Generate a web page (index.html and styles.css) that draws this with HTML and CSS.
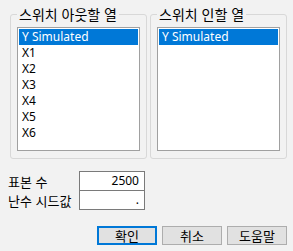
FILE: index.html
```html
<!DOCTYPE html>
<html lang="ko">
<head>
    <meta charset="UTF-8">
    <title>스위치</title>
    <link rel="stylesheet" href="styles.css">
</head>
<body>
    <div class="dialog">
        <div class="groups">
            <fieldset class="group">
                <legend>스위치 아웃할 열</legend>
                <div class="listbox">
                    <div class="item selected">Y Simulated</div>
                    <div class="item">X1</div>
                    <div class="item">X2</div>
                    <div class="item">X3</div>
                    <div class="item">X4</div>
                    <div class="item">X5</div>
                    <div class="item">X6</div>
                </div>
            </fieldset>
            <fieldset class="group">
                <legend>스위치 인할 열</legend>
                <div class="listbox">
                    <div class="item selected">Y Simulated</div>
                </div>
            </fieldset>
        </div>

        <div class="fields">
            <div class="field">
                <span class="label">표본 수</span>
                <div class="input">2500</div>
            </div>
            <div class="field">
                <span class="label">난수 시드값</span>
                <div class="input">.</div>
            </div>
        </div>

        <div class="buttons">
            <button class="btn default">확인</button>
            <button class="btn">취소</button>
            <button class="btn">도움말</button>
        </div>
    </div>
</body>
</html>
```

FILE: styles.css
```css
body {
    margin: 0;
    width: 293px;
    height: 251px;
    background-color: #f2f2f2;
    font-family: "Noto Sans", "Noto Sans CJK KR", sans-serif;
    font-size: 12px;
    color: #000;
    overflow: hidden;
}
.dialog {
    padding: 6px 6px 0 8px;
}
.groups {
    display: flex;
    gap: 3px;
    margin-left: 2px;
}
.group {
    box-sizing: border-box;
    width: 137px;
    height: 153px;
    margin: 0;
    padding: 5px 6px 6px 6px;
    border: 1px solid #d8d8d8;
    border-radius: 3px;
}
.group legend {
    margin-left: 0;
    padding: 0 2px;
    font-family: "Noto Sans CJK KR", sans-serif;
    font-size: 14px;
    line-height: 16px;
}
.listbox {
    box-sizing: border-box;
    height: 124px;
    padding: 1px;
    border: 1px solid #a0a0a0;
    background: #fff;
}
.item {
    height: 16px;
    line-height: 16px;
    padding-left: 3px;
}
.item.selected {
    background-color: #0078d7;
    color: #fff;
}
.fields {
    margin-top: 12px;
}
.field {
    display: flex;
    align-items: center;
    height: 20px;
}
.field + .field {
    margin-top: -1px;
}
.label {
    width: 71px;
    font-family: "Noto Sans CJK KR", sans-serif;
    font-size: 13px;
}
.input {
    box-sizing: border-box;
    width: 66px;
    height: 20px;
    line-height: 18px;
    padding-right: 5px;
    text-align: right;
    border: 1px solid #7a7a7a;
    background: #fff;
}
.buttons {
    display: flex;
    justify-content: flex-end;
    gap: 5px;
    margin-top: 16px;
}
.btn {
    box-sizing: border-box;
    width: 60px;
    height: 19px;
    padding: 0;
    font-family: "Noto Sans CJK KR", sans-serif;
    font-size: 13px;
    line-height: 15px;
    background-color: #e1e1e1;
    border: 1px solid #adadad;
    color: #000;
}
.btn.default {
    border: 2px solid #0078d7;
}
```
